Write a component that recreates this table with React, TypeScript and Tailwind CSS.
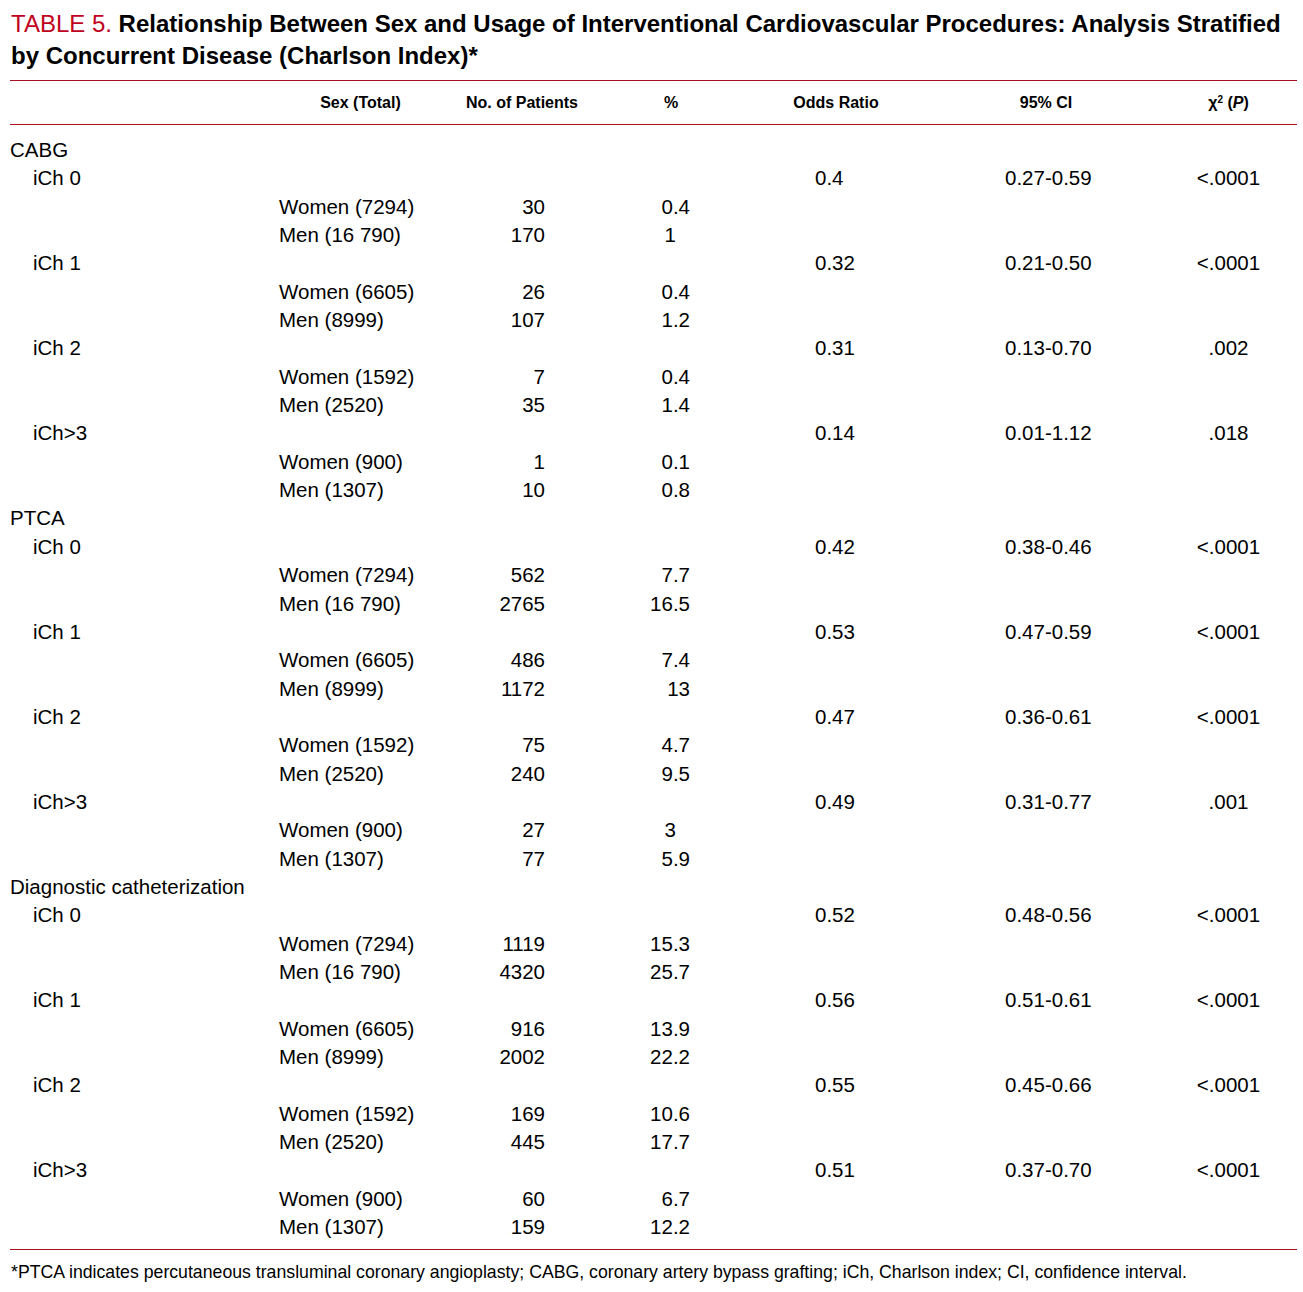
const groups = (data: [string, string, string, string, [string, string, string, boolean?][]][]) =>
  data.map(([label, or, ci, p, rows]) => ({ label, or, ci, p, rows }));

const sections = [
  {
    name: 'CABG',
    groups: groups([
      ['iCh 0', '0.4', '0.27-0.59', '<.0001', [['Women (7294)', '30', '0.4'], ['Men (16 790)', '170', '1', true]]],
      ['iCh 1', '0.32', '0.21-0.50', '<.0001', [['Women (6605)', '26', '0.4'], ['Men (8999)', '107', '1.2']]],
      ['iCh 2', '0.31', '0.13-0.70', '.002', [['Women (1592)', '7', '0.4'], ['Men (2520)', '35', '1.4']]],
      ['iCh>3', '0.14', '0.01-1.12', '.018', [['Women (900)', '1', '0.1'], ['Men (1307)', '10', '0.8']]],
    ]),
  },
  {
    name: 'PTCA',
    groups: groups([
      ['iCh 0', '0.42', '0.38-0.46', '<.0001', [['Women (7294)', '562', '7.7'], ['Men (16 790)', '2765', '16.5']]],
      ['iCh 1', '0.53', '0.47-0.59', '<.0001', [['Women (6605)', '486', '7.4'], ['Men (8999)', '1172', '13']]],
      ['iCh 2', '0.47', '0.36-0.61', '<.0001', [['Women (1592)', '75', '4.7'], ['Men (2520)', '240', '9.5']]],
      ['iCh>3', '0.49', '0.31-0.77', '.001', [['Women (900)', '27', '3', true], ['Men (1307)', '77', '5.9']]],
    ]),
  },
  {
    name: 'Diagnostic catheterization',
    groups: groups([
      ['iCh 0', '0.52', '0.48-0.56', '<.0001', [['Women (7294)', '1119', '15.3'], ['Men (16 790)', '4320', '25.7']]],
      ['iCh 1', '0.56', '0.51-0.61', '<.0001', [['Women (6605)', '916', '13.9'], ['Men (8999)', '2002', '22.2']]],
      ['iCh 2', '0.55', '0.45-0.66', '<.0001', [['Women (1592)', '169', '10.6'], ['Men (2520)', '445', '17.7']]],
      ['iCh>3', '0.51', '0.37-0.70', '<.0001', [['Women (900)', '60', '6.7'], ['Men (1307)', '159', '12.2']]],
    ]),
  },
];

const cols = 'grid grid-cols-[269px_163px_160px_138px_192px_228px_137px]';
const row = `${cols} h-[28.35px] items-center`;

export default function App() {
  return (
    <div className="bg-white w-[1303px] min-h-[1292px] pl-[10px] pt-[8px] text-black font-['Liberation_Sans',Arial,sans-serif]">
      <div className="w-[1287px]">
        <h1 className="text-[24px] leading-[32px] pl-[1px]">
          <span className="text-[#c0001d] font-normal">TABLE 5.</span>{' '}
          <span className="font-bold">
            Relationship Between Sex and Usage of Interventional Cardiovascular Procedures: Analysis Stratified by
            Concurrent Disease (Charlson Index)*
          </span>
        </h1>

        {/* header */}
        <div className={`${cols} mt-[8px] h-[45px] items-center border-y border-[#a8101e] text-[16px] font-bold text-center`}>
          <div />
          <div>Sex (Total)</div>
          <div>No. of Patients</div>
          <div>%</div>
          <div>Odds Ratio</div>
          <div>95% CI</div>
          <div>
            χ<sup className="text-[10px]">2</sup> (<i>P</i>)
          </div>
        </div>

        <div className="pt-[10px] pb-[9px] text-[20.5px] border-b border-[#a8101e]">
          {sections.map(s => (
            <div key={s.name}>
              <div className={row}>
                <div className="col-span-7">{s.name}</div>
              </div>
              {s.groups.map(g => (
                <div key={g.label}>
                  <div className={row}>
                    <div className="pl-[23px]">{g.label}</div>
                    <div />
                    <div />
                    <div />
                    <div className="pl-[75px]">{g.or}</div>
                    <div className="pl-[73px]">{g.ci}</div>
                    <div className="text-center">{g.p}</div>
                  </div>
                  {g.rows.map(([sex, n, pct, pad]) => (
                    <div key={sex} className={row}>
                      <div />
                      <div>{sex}</div>
                      <div className="text-right pr-[57px]">{n}</div>
                      <div className={`text-right ${pad ? 'pr-[64px]' : 'pr-[50px]'}`}>{pct}</div>
                    </div>
                  ))}
                </div>
              ))}
            </div>
          ))}
        </div>

        <p className="pt-[9px] text-[17.7px] leading-[26px] pl-[1px]">
          *PTCA indicates percutaneous transluminal coronary angioplasty; CABG, coronary artery bypass grafting; iCh,
          Charlson index; CI, confidence interval.
        </p>
      </div>
    </div>
  );
}
